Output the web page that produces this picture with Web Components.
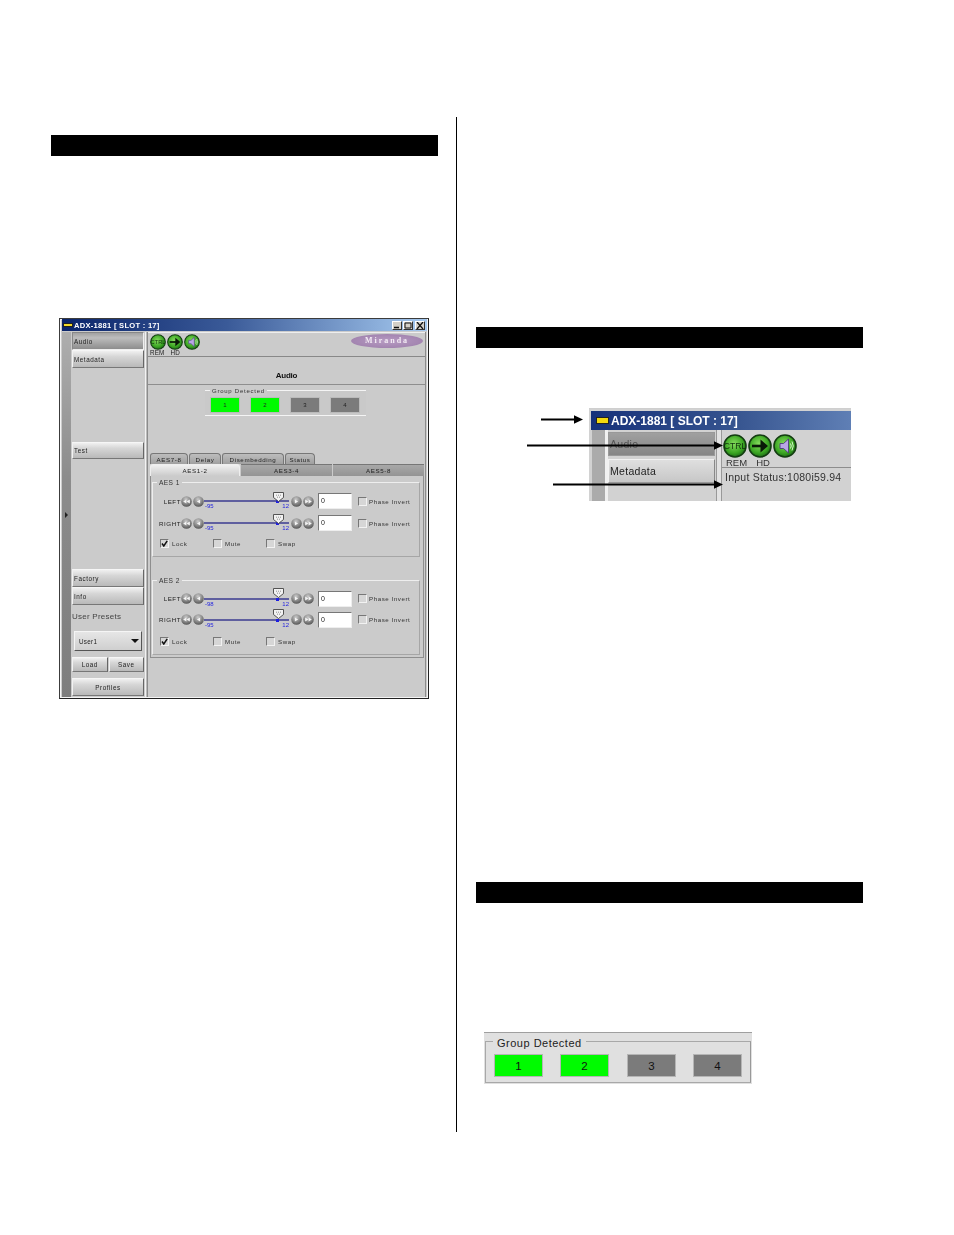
<!DOCTYPE html>
<html lang="en"><head><meta charset="utf-8"><title>ADX-1881</title>
<style>html,body{margin:0;padding:0;background:#fff}body{width:954px;height:1235px;overflow:hidden;font-family:"Liberation Sans",sans-serif}</style>
</head><body>
<doc-page>
  <section-bar slot="left"></section-bar>
  <adx-window slot="left" style="margin:162px 0 0 8px"></adx-window>
  <section-bar slot="right" style="margin-top:210px"></section-bar>
  <crop-view slot="right"></crop-view>
  <section-bar slot="right" style="margin-top:381px"></section-bar>
  <group-detected slot="right" class="big" style="margin:129px 0 0 8px"></group-detected>
</doc-page>
<script>
function def(name, html, init){
  customElements.define(name, class extends HTMLElement{
    connectedCallback(){
      if(this.shadowRoot) return;
      const r=this.attachShadow({mode:'open'});
      r.innerHTML=typeof html==='function'?html(this):html;
      if(init) init(this,r);
    }
  });
}
const at=(e,n,d='')=>e.getAttribute(n)??d;

def('doc-page',`<style>
:host{display:grid;grid-template-columns:387px 1px 387px;column-gap:18px;padding:117px 0 0 51px;height:1015px;align-items:stretch}
.l,.r{display:flex;flex-direction:column;align-items:flex-start}
.l{padding-top:18px}
.d{background:#000}
.r{margin-left:1px}
</style><div class="l"><slot name="left"></slot></div><div class="d"></div><div class="r"><slot name="right"></slot></div>`);

def('section-bar',`<style>:host{display:block;width:387px;height:21px;background:#000}</style>`);

/* --- round toolbar icons --- */
def('status-icon',e=>{const k=at(e,'kind');
 const g='g'+Math.random().toString(36).slice(2);
 let inner='';
 if(k==='ctrl') inner=`<text x="12" y="15" font-family="Liberation Sans" font-size="8.6" text-anchor="middle" fill="#10300c">CTRL</text>`;
 if(k==='arrow') inner=`<path d="M4 12H17" stroke="#0a1a08" stroke-width="2.6"/><path d="M12.5 5.5L20 12L12.5 18.5Z" fill="#0a1a08"/>`;
 if(k==='spk') inner=`<path d="M7 9.5H10.5L15.5 5V19L10.5 14.5H7Z" fill="#b9a6e6" stroke="#4a3f78" stroke-width=".9"/><path d="M17.5 9.5Q19 12 17.5 14.5M19 7.5Q21.5 12 19 16.5" stroke="#e8ffe0" fill="none" stroke-width=".9"/>`;
 return `<style>:host{display:block;width:var(--s,16px);height:var(--s,16px)}svg{display:block;width:100%;height:100%}</style>
 <svg viewBox="0 0 24 24"><defs><radialGradient id="${g}" cx=".45" cy=".4" r=".65"><stop offset="0" stop-color="#86dc5e"/><stop offset=".65" stop-color="#3aa522"/><stop offset="1" stop-color="#166012"/></radialGradient></defs>
 <circle cx="12" cy="12" r="11" fill="url(#${g})" stroke="#143d12" stroke-width="1.6"/>${inner}</svg>`});

/* --- side buttons --- */
def('side-button',e=>`<style>
:host{display:flex;align-items:center;box-sizing:border-box;width:72px;height:var(--h,18px);padding-left:1px;font:6.3px "Liberation Sans",sans-serif;letter-spacing:.55px;color:#222;
background:linear-gradient(#f0f0f0,#d6d6d6 35%,#b9b9b9);border:1px solid;border-color:#f6f6f6 #666 #777 #f2f2f2}
:host([down]){background:linear-gradient(#a2a2a2,#bdbdbd 30%,#8d8d8d);border-color:#888 #eee #eee #888}
:host([center]){justify-content:center;padding:0}
</style><slot></slot>`);

/* --- group detected --- */
def('group-detected',`<style>
:host{display:block;box-sizing:border-box;width:161px;height:26px;position:relative;background:#c9c9c9}
.f{position:absolute;inset:0;border-top:1px solid #f4f4f4;border-bottom:1px solid #f4f4f4;outline:0}
.t{position:absolute;left:5px;top:-3px;background:#cbcbcb;padding:0 2px;font:6px "Liberation Sans",sans-serif;letter-spacing:.75px;color:#333;line-height:8px;white-space:nowrap}
.b{position:absolute;inset:7px 5px auto 5px;display:flex;gap:10px}
.b span{box-sizing:border-box;width:30px;height:16px;display:flex;align-items:center;justify-content:center;font:6px "Liberation Sans",sans-serif;color:#222;border:1px solid #bbb}
.on{background:#00fb00}.off{background:#7b7b7b}
:host(.big){width:268px;height:52px;background:#e0e0e0;border-top:1px solid #9f9f9f}
:host(.big) .f{inset:8px 1px 1px 1px;border:1px solid #a8a8a8;border-right-color:#999}
:host(.big) .t{left:9px;top:4px;font-size:11px;letter-spacing:.5px;line-height:12px;background:#e0e0e0;padding:0 4px;color:#222}
:host(.big) .b{inset:21px auto auto 10px;gap:17px}
:host(.big) .b span{width:49px;height:23px;font-size:11.5px;border:1px solid #b5b5b5;color:#111}
:host(.big) .b span:nth-child(3){margin-left:1px}
</style><div class="f"></div><div class="t">Group Detected</div><div class="b"><span class="on">1</span><span class="on">2</span><span class="off">3</span><span class="off">4</span></div>`);

/* --- level row pieces --- */
def('nudge-btn',e=>{const d=at(e,'dir');const two=e.hasAttribute('double');
 const tri=(x,r)=>r?`<path d="M${x-1.6} 3.6L${x+1.6} 5.5L${x-1.6} 7.4Z" fill="#f4f4f4"/>`:`<path d="M${x+1.6} 3.6L${x-1.6} 5.5L${x+1.6} 7.4Z" fill="#f4f4f4"/>`;
 const g='n'+Math.random().toString(36).slice(2);
 return `<style>:host{display:block;width:11px;height:11px}svg{display:block}</style><svg width="11" height="11" viewBox="0 0 11 11"><defs><radialGradient id="${g}" cx=".45" cy=".3" r=".8"><stop offset="0" stop-color="#c9c9c9"/><stop offset=".6" stop-color="#7d7d7d"/><stop offset="1" stop-color="#454545"/></radialGradient></defs><circle cx="5.5" cy="5.5" r="5.3" fill="url(#${g})"/>${two?tri(3.8,d==='r')+tri(7.2,d==='r'):tri(5.5,d==='r')}</svg>`});

def('level-slider',e=>`<style>
:host{display:block;position:relative;width:86px;height:16px}
.tr{position:absolute;left:0;right:1px;top:7px;height:2px;background:#5f5f9f}
.v{position:absolute;top:10px;font:6px "Liberation Sans",sans-serif;color:#1f1fe0;line-height:7px}
.a{left:1px}.z{right:1px}
svg{position:absolute;left:${at(e,'thumb','69')}px;top:${at(e,'ty','-1')}px}
.m{position:absolute;left:${+at(e,'thumb','69')+3}px;top:7px;width:3px;height:3px;background:#1f1fe0}
</style><div class="tr"></div><div class="m"></div><svg width="11" height="10" viewBox="0 0 11 10"><path d="M.5.5H10.5V5.5L5.5 9.5L.5 5.5Z" fill="#f2f2f2" stroke="#444" stroke-width=".9"/><path d="M3 3.2h1M5 3.2h1M7 3.2h1M4 5.2h1M6 5.2h1" stroke="#777" stroke-width=".8"/></svg><span class="v a">${at(e,'min')}</span><span class="v z">12</span>`);

def('check-item',e=>`<style>
:host{display:inline-flex;align-items:center;gap:var(--cg,3px);font:6.2px "Liberation Sans",sans-serif;letter-spacing:var(--ls,.55px);color:#333;white-space:nowrap}
i{display:block;box-sizing:border-box;width:9px;height:9px;background:#d6d6d6;border:1px solid;border-color:#777 #f2f2f2 #f2f2f2 #777;position:relative}
svg{display:block;position:absolute;left:0;top:0}
</style><i>${e.hasAttribute('checked')?'<svg width="7" height="7" viewBox="0 0 7 7"><path d="M1 3.5L2.8 6L6.2 .8" stroke="#111" stroke-width="1.5" fill="none"/></svg>':''}</i><span><slot></slot></span>`);

def('level-row',e=>`<style>
:host{display:flex;align-items:center;height:17px;--cg:2px}
.l{width:28px;text-align:right;font:6.2px "Liberation Sans",sans-serif;letter-spacing:.55px;color:#222}
nudge-btn+nudge-btn{margin-left:1px}
.in{box-sizing:border-box;width:34px;height:16px;margin:0 6px 0 4px;padding-left:2px;background:#fff;border:1px solid;border-color:#777 #eee #eee #777;font:7px/14px "Liberation Sans",sans-serif;color:#222}
</style><span class="l">${at(e,'label')}</span><nudge-btn dir="l" double></nudge-btn><nudge-btn dir="l"></nudge-btn>
<level-slider min="${at(e,'min')}" thumb="69" ty="${at(e,'ty','-1')}"></level-slider>
<nudge-btn dir="r" style="margin-left:1px"></nudge-btn><nudge-btn dir="r" double></nudge-btn><span class="in">0</span><check-item>Phase Invert</check-item>`);

def('aes-group',e=>`<style>
:host{display:block;position:relative;box-sizing:border-box;width:268px;margin-left:1px;border:1px solid;border-color:#eee #a6a6a6 #a6a6a6 #eee;padding:var(--pt,9.5px) 0 8px 0}
.t{position:absolute;left:4px;top:-5px;padding:0 2px;background:#cbcbcb;font:6.6px/9px "Liberation Sans",sans-serif;color:#333;letter-spacing:.4px}
.c{display:flex;margin:var(--cm,7px) 0 0 7px}
check-item{width:53px}
.rows{display:flex;flex-direction:column;gap:var(--rg,5px)}
</style><div class="t">${at(e,'name')}</div><div class="rows">
<level-row label="LEFT" min="${at(e,'min1')}" ty="${at(e,'ty','-1')}"></level-row><level-row label="RIGHT" min="${at(e,'min2')}" ty="${at(e,'ty','-1')}"></level-row></div>
<div class="c"><check-item checked>Lock</check-item><check-item>Mute</check-item><check-item>Swap</check-item></div>`);

def('tab-rows',`<style>
:host{display:block;font:6.2px "Liberation Sans",sans-serif;letter-spacing:.6px;color:#222}
.r{display:flex}
.a{height:11px;gap:1px}
.a span{display:flex;align-items:center;justify-content:center;background:linear-gradient(#bdbdbd,#a0a0a0);border:1px solid #777;border-bottom:0;border-radius:3px 4px 0 0;box-sizing:border-box}
.b{height:12px;gap:1px}
.b span{display:flex;align-items:center;justify-content:center;width:91px;box-sizing:border-box;background:linear-gradient(#a8a8a8,#949494);border-top:1px solid #777}
.b span.on{background:linear-gradient(#f0f0f0,#cbcbcb);border:1px solid #eee;border-bottom:0;border-radius:3px 3px 0 0;width:90px}
</style><div class="r a"><span style="width:38px">AES7-8</span><span style="width:32px">Delay</span><span style="width:62px">Disembedding</span><span style="width:30px">Status</span></div>
<div class="r b"><span class="on">AES1-2</span><span>AES3-4</span><span>AES5-8</span></div>`);

def('adx-window',`<style>
:host{display:block;box-sizing:border-box;width:370px;height:381px;background:#cbcbcb;border:1px solid #3c3c3c;border-right-color:#222;border-bottom-color:#222;padding:0 2px 1px 2px;box-shadow:inset 0 0 0 1px #f4f4f4;font-family:"Liberation Sans",sans-serif;filter:blur(.3px)}
.tb{display:flex;align-items:center;height:12px;background:linear-gradient(90deg,#0a246a,#3a5a98 45%,#a6caf0);color:#fff;font:bold 7.6px "Liberation Sans",sans-serif;letter-spacing:.26px;padding-left:1px;gap:1px;margin-right:-1px}
.led{width:8px;height:2px;background:#f5dc2a;border:1px solid #222}
.tt{flex:1}
.wb{display:flex;gap:1px;margin-right:2px}
.wb b{display:block;width:10px;height:9px;box-sizing:border-box;background:#d4d0c8;border:1px solid;border-color:#fff #333 #333 #fff;font:bold 7px/7px "Liberation Sans",sans-serif;color:#111;text-align:center}
.wb svg{display:block}
.body{display:flex;height:365px;margin-top:1px}
.strip{width:9px;margin:0 1px 0 0;background:linear-gradient(#aeaeae,#8c8c8c 40%,#7d7d7d);display:flex;align-items:center;justify-content:center;box-sizing:border-box}
.strip i{display:block;border:3px solid transparent;border-left:3px solid #222;margin-left:3px}
.side{width:72px;display:flex;flex-direction:column}
.sep{width:3px;margin:0 0 0 1px;border-left:1px solid #f2f2f2;border-right:1px solid #8b8b8b;background:#bbb;box-sizing:border-box}
.up{font:8px/10px "Liberation Sans",sans-serif;color:#444;letter-spacing:.25px;margin-top:7px}
.combo{box-sizing:border-box;width:68px;height:20px;margin:9px 0 0 2px;display:flex;align-items:center;justify-content:space-between;padding:0 2px 0 4px;font:6.3px "Liberation Sans",sans-serif;color:#222;letter-spacing:.3px;background:linear-gradient(#e6e6e6,#cfcfcf);border:1px solid;border-color:#f5f5f5 #555 #555 #f5f5f5}
.combo i{border:4px solid transparent;border-top:4px solid #111;border-bottom:0;width:0}
.pair{display:flex;gap:1px;margin-top:6px;height:15px}
.pair side-button{width:36px;--h:15px}
.main{flex:1;display:flex;flex-direction:column;min-width:0;border-right:1px solid #8b8b8b}
.tool{height:25px;box-sizing:border-box;border-bottom:1px solid #888;display:flex;justify-content:space-between;border-top:1px solid #eee;position:relative}
.ic{display:flex;gap:1px;margin:1px 0 0 2px;--s:16px}
.lb{position:absolute;left:2px;top:16px;font:6.3px/7px "Liberation Sans",sans-serif;color:#222;display:flex;gap:6px;letter-spacing:.15px}
.logo{width:72px;height:14px;margin:1px 2px 0 0;border-radius:50%;background:radial-gradient(ellipse,#b79bc3,#9a7ba8);color:#f3ebf4;font:bold 8px/13px "Liberation Serif",serif;letter-spacing:2px;text-align:center}
h3{margin:0;height:28px;box-sizing:border-box;border-bottom:1px solid #8e8e8e;text-align:center;font:bold 8px/38px "Liberation Sans",sans-serif;letter-spacing:-.25px;color:#111}
group-detected{margin:5px 0 0 57px;flex:none}
tab-rows{margin:37px 0 0 2px}
.panel{box-sizing:border-box;width:274px;height:182px;margin-left:2px;background:#cbcbcb;border:1px solid #8e8e8e;border-top:0;padding-top:6px;display:flex;flex-direction:column;gap:23px}
.g2{--rg:4px;--cm:9px}
</style>
<div class="tb"><span class="led"></span><span class="tt">ADX-1881 [ SLOT : 17]</span><span class="wb"><b><svg width="8" height="7"><path d="M1 5.5H6" stroke="#111" stroke-width="1.5"/></svg></b><b><svg width="8" height="7"><path d="M1 1H7V6H1Z" fill="none" stroke="#111"/></svg></b><b style="margin-left:1px"><svg width="8" height="7"><path d="M1 0L7 7M7 0L1 7" stroke="#111" stroke-width="1.3"/></svg></b></span></div>
<div class="body">
 <div class="strip"><i></i></div>
 <div class="side">
  <side-button down style="--h:18px">Audio</side-button>
  <side-button>Metadata</side-button>
  <side-button style="margin-top:74px;--h:17px">Test</side-button>
  <side-button style="margin-top:110px">Factory</side-button>
  <side-button>Info</side-button>
  <div class="up">User Presets</div>
  <div class="combo"><span>User1</span><i></i></div>
  <div class="pair"><side-button center>Load</side-button><side-button center>Save</side-button></div>
  <side-button center style="margin-top:6px">Profiles</side-button>
 </div>
 <div class="sep"></div>
 <div class="main">
  <div class="tool"><div class="ic"><status-icon kind="ctrl"></status-icon><status-icon kind="arrow"></status-icon><status-icon kind="spk"></status-icon></div><div class="lb"><span>REM</span><span>HD</span></div><div class="logo">Miranda</div></div>
  <h3>Audio</h3>
  <group-detected></group-detected>
  <tab-rows></tab-rows>
  <div class="panel">
   <aes-group name="AES 1" min1="-95" min2="-95"></aes-group>
   <aes-group class="g2" name="AES 2" min1="-98" min2="-95" ty="-2.5"></aes-group>
  </div>
 </div>
</div>`);

/* --- cropped enlarged screenshot with callout arrows --- */
def('call-arrow',e=>{const w=+at(e,'w');return `<style>:host{position:absolute;left:${at(e,'x')}px;top:${at(e,'y')}px;display:block;line-height:0}</style>
<svg width="${w}" height="9" viewBox="0 0 ${w} 9"><path d="M0 4.5H${w-6}" stroke="#000" stroke-width="2.2"/><path d="M${w-9} .3L${w} 4.5L${w-9} 8.7Z" fill="#000"/></svg>`});

def('crop-view',`<style>
:host{display:block;position:relative;box-sizing:border-box;width:262px;height:93px;margin:60px 0 0 113px;}
.shot{width:262px;height:93px;box-sizing:border-box;background:#d2d2d2;border-top:1px solid #cfcfcf;overflow:hidden;filter:blur(.35px);font-family:"Liberation Sans",sans-serif}
.tb{display:flex;align-items:center;gap:2px;height:19px;margin:2px 0 0 2px;padding-left:5px;background:linear-gradient(90deg,#16317a,#36548f 55%,#5f7fb5);color:#fff;font:bold 12px "Liberation Sans",sans-serif;letter-spacing:0}
.led{width:11px;height:5px;background:#f2d80f;border:1px solid #222}
.body{display:flex;height:71px;margin-left:2px}
.strip{width:13px;margin-left:1px;background:#ababab}
.line{width:3px;background:#f0f0f0}
.side{width:107px;padding-top:2px;display:flex;flex-direction:column;gap:3px}
.sb{box-sizing:border-box;height:24px;padding-left:1px;display:flex;align-items:center;font:10.5px "Liberation Sans",sans-serif;letter-spacing:.3px;color:#222;background:linear-gradient(#dfdfdf,#c7c7c7);border:1px solid #f2f2f2;border-right-color:#888;border-bottom-color:#999}
.sb.d{background:linear-gradient(#a0a0a0,#868686);color:#555;border-color:#999}
.sep{width:6px;margin-left:1px;border-left:1px solid #999;border-right:1px solid #999;background:#e2e2e2;box-sizing:border-box}
.main{flex:1;min-width:0}
.tool{height:38px;box-sizing:border-box;border-bottom:1px solid #8d8d8d;position:relative}
.ic{display:flex;gap:1px;padding:4px 0 0 1px;--s:24px}
.lb{position:absolute;left:4px;top:27px;display:flex;gap:9px;font:9.5px/11px "Liberation Sans",sans-serif;color:#333}
.st{padding:3px 0 0 3px;font:10.5px/13px "Liberation Sans",sans-serif;letter-spacing:.24px;color:#333;white-space:nowrap}
</style><div class="shot"><div class="tb"><span class="led"></span><span>ADX-1881 [ SLOT : 17]</span></div>
<div class="body"><div class="strip"></div><div class="line"></div><div class="side"><div class="sb d">Audio</div><div class="sb">Metadata</div></div><div class="sep"></div>
<div class="main"><div class="tool"><div class="ic"><status-icon kind="ctrl"></status-icon><status-icon kind="arrow"></status-icon><status-icon kind="spk"></status-icon></div><div class="lb"><span>REM</span><span>HD</span></div></div><div class="st">Input Status:1080i59.94</div></div></div></div>
<call-arrow x="-48" y="7" w="42"></call-arrow><call-arrow x="-62" y="33" w="196"></call-arrow><call-arrow x="-36" y="72" w="170"></call-arrow>`);
</script>
</body></html>
